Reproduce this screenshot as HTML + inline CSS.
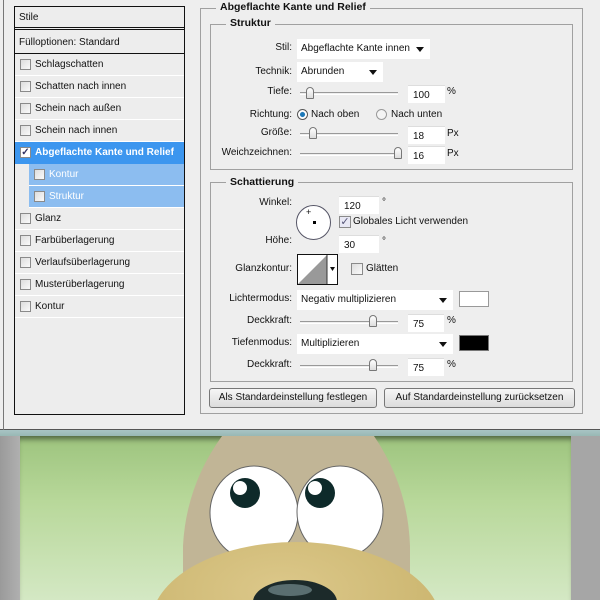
<!DOCTYPE html>
<html><head><style>
*{margin:0;padding:0;box-sizing:border-box}
body{width:600px;height:600px;overflow:hidden;position:relative;background:#a9a9a9;font-family:"Liberation Sans",Tahoma,sans-serif;font-size:10px;color:#111}
.a{position:absolute;white-space:nowrap}
.dlg{position:absolute;left:0;top:0;width:600px;height:430px;background:#eeeeee;border-bottom:1px solid #555}
.frame{position:absolute;left:0;top:430px;width:600px;height:6px;background:linear-gradient(#a8c4c4,#98b8b4)}
.list{position:absolute;left:14px;top:6px;width:171px;height:409px;border:1px solid #111;background:#ededed}
.row{position:absolute;left:0;width:169px;height:22px;border-bottom:1px solid #fff;line-height:21px;padding-left:20px}
.cb{position:absolute;width:11px;height:11px;border:1px solid #8a8a8a;background:linear-gradient(135deg,#ddd,#fafafa)}
.row .cb{left:5px;top:5px}
.grp{position:absolute;border:1px solid #a0a0a0}
.gt{position:absolute;background:#eeeeee;font-weight:bold;font-size:10.5px;padding:0 4px}
.lbl{position:absolute;text-align:right;width:90px}
.dd{position:absolute;background:#fff;height:20px;line-height:20px;padding-left:4px}
.dd:after{content:"";position:absolute;right:6px;top:8px;border:4px solid transparent;border-top:5px solid #111;border-bottom:0}
.in{position:absolute;background:#fff;height:18px;line-height:20px;padding-left:5px;border-top:1px solid #ddd}
.sl{position:absolute;height:3px;border-top:1px solid #999;border-bottom:1px solid #fff}
.th{position:absolute;width:8px;height:12px;border:1px solid #777;border-radius:4px 4px 1px 1px;background:linear-gradient(#fff,#ddd)}
.btn{position:absolute;height:20px;border:1px solid #777;border-radius:3px;background:linear-gradient(#f6f6f6,#dcdcdc);text-align:center;line-height:18px}
</style></head><body>
<div class="dlg">
 <div style="position:absolute;left:3px;top:0;width:1px;height:430px;background:#777"></div>
 <div class="list">
  <div class="row" style="top:0;height:23px;padding-left:4px;border-bottom:3px double #111">Stile</div>
  <div class="row" style="top:25px;height:22px;padding-left:4px;border-bottom:1px solid #111">Fülloptionen: Standard</div>
  <div class="row" style="top:47px"><span class="cb"></span>Schlagschatten</div>
  <div class="row" style="top:69px"><span class="cb"></span>Schatten nach innen</div>
  <div class="row" style="top:91px"><span class="cb"></span>Schein nach außen</div>
  <div class="row" style="top:113px"><span class="cb"></span>Schein nach innen</div>
  <div class="row" style="top:135px;background:#3c96ef;color:#fff;font-weight:bold;border-bottom:none"><span class="cb" style="background:#fff;color:#336;font-size:10px;line-height:9px;text-align:center">✓</span>Abgeflachte Kante und Relief</div>
  <div class="row" style="top:157px;left:14px;width:155px;background:#8cbdf0;color:#fff"><span class="cb"></span>Kontur</div>
  <div class="row" style="top:179px;left:14px;width:155px;background:#8cbdf0;color:#fff"><span class="cb"></span>Struktur</div>
  <div class="row" style="top:201px"><span class="cb"></span>Glanz</div>
  <div class="row" style="top:223px"><span class="cb"></span>Farbüberlagerung</div>
  <div class="row" style="top:245px"><span class="cb"></span>Verlaufsüberlagerung</div>
  <div class="row" style="top:267px"><span class="cb"></span>Musterüberlagerung</div>
  <div class="row" style="top:289px"><span class="cb"></span>Kontur</div>
 </div>

 <div class="grp" style="left:200px;top:8px;width:383px;height:406px"></div>
 <div class="gt" style="left:216px;top:1px">Abgeflachte Kante und Relief</div>
 <div class="grp" style="left:210px;top:24px;width:363px;height:146px"></div>
 <div class="gt" style="left:226px;top:17px">Struktur</div>

 <div class="lbl" style="left:202px;top:42px">Stil:</div>
 <div class="dd" style="left:297px;top:39px;width:133px">Abgeflachte Kante innen</div>
 <div class="lbl" style="left:202px;top:66px">Technik:</div>
 <div class="dd" style="left:297px;top:62px;width:86px">Abrunden</div>
 <div class="lbl" style="left:202px;top:86px">Tiefe:</div>
 <div class="sl" style="left:300px;top:92px;width:98px"></div><div class="th" style="left:306px;top:87px"></div>
 <div class="in" style="left:408px;top:85px;width:37px">100</div><div class="a" style="left:447px;top:86px">%</div>
 <div class="lbl" style="left:202px;top:109px">Richtung:</div>
 <div class="a" style="left:297px;top:109px;width:11px;height:11px;border-radius:50%;border:1px solid #555;background:radial-gradient(#1c78b8 35%,#fff 45%)"></div>
 <div class="a" style="left:311px;top:109px">Nach oben</div>
 <div class="a" style="left:376px;top:109px;width:11px;height:11px;border-radius:50%;border:1px solid #999;background:#f4f4f4"></div>
 <div class="a" style="left:391px;top:109px">Nach unten</div>
 <div class="lbl" style="left:202px;top:127px">Größe:</div>
 <div class="sl" style="left:300px;top:133px;width:98px"></div><div class="th" style="left:309px;top:127px"></div>
 <div class="in" style="left:408px;top:126px;width:37px">18</div><div class="a" style="left:447px;top:128px">Px</div>
 <div class="lbl" style="left:202px;top:147px">Weichzeichnen:</div>
 <div class="sl" style="left:300px;top:153px;width:98px"></div><div class="th" style="left:394px;top:147px"></div>
 <div class="in" style="left:408px;top:146px;width:37px">16</div><div class="a" style="left:447px;top:148px">Px</div>

 <div class="grp" style="left:210px;top:182px;width:363px;height:200px"></div>
 <div class="gt" style="left:226px;top:176px">Schattierung</div>
 <div class="lbl" style="left:202px;top:197px">Winkel:</div>
 <div class="a" style="left:296px;top:205px;width:35px;height:35px;border-radius:50%;border:1px solid #556;background:#fff"></div>
 <div class="a" style="left:306px;top:207px;font-size:9px">+</div>
 <div class="a" style="left:313px;top:221px;width:3px;height:3px;background:#000"></div>
 <div class="in" style="left:339px;top:196px;width:40px">120</div><div class="a" style="left:382px;top:197px">°</div>
 <div class="cb" style="left:339px;top:216px;width:12px;height:12px;background:#e8e8f4;color:#557;font-size:11px;line-height:10px;text-align:center">✓</div>
 <div class="a" style="left:353px;top:216px">Globales Licht verwenden</div>
 <div class="lbl" style="left:202px;top:235px">Höhe:</div>
 <div class="in" style="left:339px;top:235px;width:40px">30</div><div class="a" style="left:382px;top:236px">°</div>
 <div class="lbl" style="left:202px;top:263px">Glanzkontur:</div>
 <div class="a" style="left:297px;top:254px;width:41px;height:31px;border:1px solid #111;background:#fff;overflow:hidden">
  <svg width="40" height="30"><polygon points="0,29 29,0 29,29" fill="#999"/><line x1="29" y1="0" x2="29" y2="30" stroke="#333"/><polygon points="32,12 37,12 34.5,16" fill="#111"/></svg></div>
 <div class="cb" style="left:351px;top:263px;width:12px;height:12px"></div>
 <div class="a" style="left:366px;top:263px">Glätten</div>
 <div class="lbl" style="left:202px;top:293px">Lichtermodus:</div>
 <div class="dd" style="left:297px;top:290px;width:156px">Negativ multiplizieren</div>
 <div class="a" style="left:459px;top:291px;width:30px;height:16px;border:1px solid #999;background:#fff"></div>
 <div class="lbl" style="left:202px;top:315px">Deckkraft:</div>
 <div class="sl" style="left:300px;top:321px;width:98px"></div><div class="th" style="left:369px;top:315px"></div>
 <div class="in" style="left:408px;top:314px;width:36px">75</div><div class="a" style="left:447px;top:315px">%</div>
 <div class="lbl" style="left:202px;top:337px">Tiefenmodus:</div>
 <div class="dd" style="left:297px;top:334px;width:156px">Multiplizieren</div>
 <div class="a" style="left:459px;top:335px;width:30px;height:16px;border:1px solid #777;background:#000"></div>
 <div class="lbl" style="left:202px;top:359px">Deckkraft:</div>
 <div class="sl" style="left:300px;top:365px;width:98px"></div><div class="th" style="left:369px;top:359px"></div>
 <div class="in" style="left:408px;top:358px;width:36px">75</div><div class="a" style="left:447px;top:359px">%</div>

 <div class="btn" style="left:209px;top:388px;width:168px">Als Standardeinstellung festlegen</div>
 <div class="btn" style="left:384px;top:388px;width:191px">Auf Standardeinstellung zurücksetzen</div>
</div>
<div class="frame"></div>
<div class="a" style="left:20px;top:436px;width:551px;height:164px;background:linear-gradient(#9dc47e,#b8d89a 40%,#d4e8c4);box-shadow:inset 0 6px 6px -3px rgba(0,0,0,.5)"></div>
<div class="a" style="left:0;top:436px;width:20px;height:164px;background:linear-gradient(90deg,#9a9a9a,#b0b0b0)"></div>
<div class="a" style="left:571px;top:436px;width:29px;height:164px;background:#a6a6a6"></div>
<svg class="a" style="left:0;top:436px" width="600" height="164">
 <defs><radialGradient id="m" cx="0.45" cy="0.3" r="0.7"><stop offset="0" stop-color="#dcc88a"/><stop offset="1" stop-color="#c8b26a"/></radialGradient></defs>
 <path d="M222,0 L374,0 Q408,50 410,110 L410,164 L183,164 L183,110 Q186,50 222,0Z" fill="#c1b596"/>
 <ellipse cx="254" cy="77" rx="44" ry="47" fill="#fff" stroke="#666" stroke-width="1"/>
 <ellipse cx="340" cy="76" rx="43" ry="46" fill="#fff" stroke="#666" stroke-width="1"/>
 <circle cx="245" cy="57" r="15" fill="#0e2a2a"/><circle cx="240" cy="52" r="7" fill="#fff"/>
 <circle cx="320" cy="57" r="15" fill="#0e2a2a"/><circle cx="315" cy="52" r="7" fill="#fff"/>
 <ellipse cx="296" cy="188" rx="145" ry="82" fill="url(#m)"/>
 <ellipse cx="295" cy="166" rx="42" ry="22" fill="#1c2a2a"/>
 <ellipse cx="290" cy="154" rx="22" ry="6" fill="#5a6e70"/>
</svg>
</body></html>
